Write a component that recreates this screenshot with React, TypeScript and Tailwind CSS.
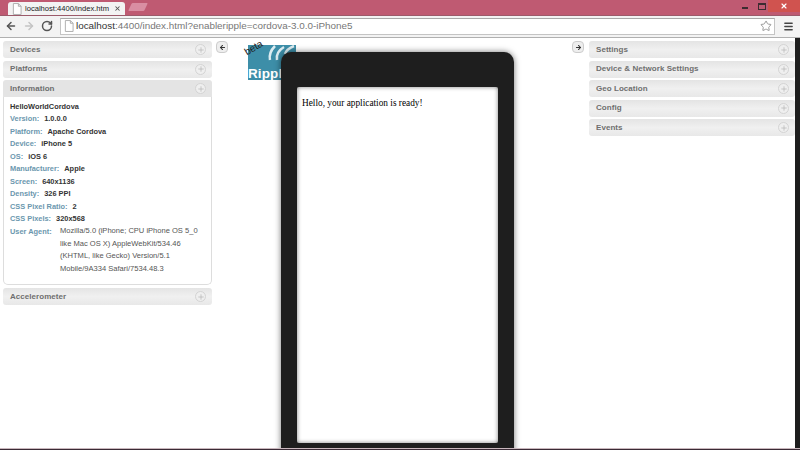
import { ArrowLeft, ArrowRight, Menu, Plus, RotateCw, Star, X } from 'lucide-react'

const leftPanels = ['Devices', 'Platforms']
const rightPanels = ['Settings', 'Device & Network Settings', 'Geo Location', 'Config', 'Events']

const info = [
  { label: 'Version:', value: '1.0.0.0' },
  { label: 'Platform:', value: 'Apache Cordova' },
  { label: 'Device:', value: 'iPhone 5' },
  { label: 'OS:', value: 'iOS 6' },
  { label: 'Manufacturer:', value: 'Apple' },
  { label: 'Screen:', value: '640x1136' },
  { label: 'Density:', value: '326 PPI' },
  { label: 'CSS Pixel Ratio:', value: '2' },
  { label: 'CSS Pixels:', value: '320x568' },
]

function PageIcon() {
  return (
    <svg width="10" height="12" viewBox="0 0 11 13" className="flex-none">
      <path d="M1.5 0.5h5.5l3 3v9h-8.5z M7 0.5v3h3" fill="#fff" stroke="#a9a9a9" />
    </svg>
  )
}

function PanelHeader({ title, className }: { title: string; className?: string }) {
  return (
    <div
      className={`flex h-[17px] flex-none items-center justify-between rounded-[3px] bg-gradient-to-b from-[#e4e4e4] via-[#f0f0f0] to-[#e8e8e8] pr-[6px] pl-[7px] text-[8px] font-bold tracking-[0.05px] text-[#6e6e6e] ${className ?? ''}`}
    >
      <span>{title}</span>
      <span className="flex h-[11px] w-[11px] items-center justify-center rounded-full border border-[#d4d4d4] bg-[#efefef] text-[#b4b4b4]">
        <Plus size={8} strokeWidth={2} />
      </span>
    </div>
  )
}

function CollapseButton({ right }: { right?: boolean }) {
  return (
    <div className="flex h-[12px] w-[12px] flex-none items-center justify-center rounded-[4px] border border-[#ccc] bg-[#eee] text-[#333]">
      {right ? <ArrowRight size={7} strokeWidth={3.5} /> : <ArrowLeft size={7} strokeWidth={3.5} />}
    </div>
  )
}

function InfoPanel() {
  return (
    <div className="flex-none">
      <PanelHeader title="Information" className="rounded-b-none bg-none bg-[#e4e4e4]" />
      <div className="h-[188px] rounded-b-[5px] border border-t-0 border-[#ddd] bg-white pt-[3px] pl-[6px] text-[7.4px] font-bold text-[#333]">
        <div className="flex h-[12.5px] items-center">HelloWorldCordova</div>
        {info.map((row) => (
          <div key={row.label} className="flex h-[12.5px] items-center gap-[5px]">
            <span className="text-[#6b97ae]">{row.label}</span>
            <span>{row.value}</span>
          </div>
        ))}
        <div className="flex">
          <span className="w-[50px] flex-none pt-[1px] text-[#6b97ae]">User Agent:</span>
          <span className="text-[7.55px] leading-[12.5px] font-normal whitespace-nowrap text-[#555]">
            Mozilla/5.0 (iPhone; CPU iPhone OS 5_0
            <br />
            like Mac OS X) AppleWebKit/534.46
            <br />
            (KHTML, like Gecko) Version/5.1
            <br />
            Mobile/9A334 Safari/7534.48.3
          </span>
        </div>
      </div>
    </div>
  )
}

function RippleLogo() {
  return (
    <div className="absolute top-[7px] left-[36px] h-[35px] w-[48px] overflow-hidden bg-[#3d8ea8]">
      <svg width="48" height="35" viewBox="0 0 48 35" className="absolute inset-0">
        <g fill="none" stroke="#dcecf1" strokeWidth="2.5">
          <path d="M22 15c-1-5 1-10 5-14" />
          <path d="M29 15c-1-5 2-10 7-13" />
          <path d="M37 9c1-3 4-6 9-8" />
        </g>
      </svg>
      <span className="absolute bottom-[-2px] left-[0px] text-[13.5px] leading-[16px] font-bold tracking-[0.1px] text-white">
        Ripple
      </span>
    </div>
  )
}

export default function App() {
  return (
    <div className="flex h-[450px] w-[800px] flex-col overflow-hidden bg-white font-['Liberation_Sans',Arial,sans-serif]">
      <div className="relative flex h-[15px] flex-none items-end bg-[#bf5a72] pl-[8px]">
        <div className="flex h-[13px] w-[117px] items-center gap-[3px] rounded-t-[3px] bg-[#f3f3f3] pl-[4px] text-[7.6px] leading-none text-[#222]">
          <PageIcon />
          <span className="w-[86px] whitespace-nowrap">localhost:4400/index.htm</span>
          <X size={7} strokeWidth={3.5} className="text-[#555]" />
        </div>
        <div className="mb-[4px] ml-[5px] h-[8px] w-[16px] -skew-x-[25deg] rounded-[1px] bg-[#d98ea2]" />
        <div className="absolute top-0 right-0 flex h-[12px] items-center">
          <span className="mt-[3px] mr-[10px] h-[2px] w-[6px] bg-[#3c2c30]" />
          <span className="mr-[2px] h-[7px] w-[8px] border border-t-2 border-[#3c2c30]" />
          <span className="flex h-[12px] w-[32px] items-center justify-center bg-[#d0534f] text-white">
            <X size={8} strokeWidth={3.5} />
          </span>
        </div>
      </div>

      <div className="flex h-[23px] flex-none items-center border-b border-[#b0b0b0] bg-[#f3f3f3] pr-[6px] pl-[5px] shadow-[inset_0_1px_0_#9c5a6a]">
        <ArrowLeft size={12} strokeWidth={3} className="text-[#555]" />
        <ArrowRight size={12} strokeWidth={3} className="ml-[6px] text-[#c4c4c4]" />
        <RotateCw size={12} strokeWidth={3} className="ml-[6px] text-[#555]" />
        <div className="ml-[7px] flex h-[17px] flex-1 items-center gap-[2px] border border-[#c4c4c4] border-t-[#a8a8a8] bg-white pl-[3px] text-[9.9px] text-[#777]">
          <PageIcon />
          <span>
            <span className="text-[#333]">localhost</span>:4400/index.html?enableripple=cordova-3.0.0-iPhone5
          </span>
          <Star size={12} className="mr-[2px] ml-auto text-[#999]" />
        </div>
        <Menu size={11} strokeWidth={3} className="ml-[8px] text-[#444]" />
      </div>

      <div className="flex min-h-0 flex-1 overflow-hidden">
        <div className="ml-[3px] flex w-[209px] flex-none flex-col gap-[2.5px] pt-[3px]">
          {leftPanels.map((title) => (
            <PanelHeader key={title} title={title} />
          ))}
          <InfoPanel />
          <PanelHeader title="Accelerometer" className="mt-[0.5px]" />
        </div>

        <div className="relative flex min-w-0 flex-1 items-start pt-[3px] pl-[4px]">
          <RippleLogo />
          <span className="absolute top-[5px] left-[32px] -rotate-[31deg] text-[10px] leading-none text-[#222]">
            beta
          </span>
          <CollapseButton />
          <div className="relative mt-[11px] ml-[53px] h-[420px] w-[233px] flex-none rounded-t-[10px] bg-[#1e1e1e] px-[16px] pt-[35px] shadow-[0_0_6px_rgba(0,0,0,0.55)]">
            <div className="h-[356px] rounded-[2px] bg-white px-[5px] py-[9px] font-['Liberation_Serif',serif] text-[9.3px] leading-[14px] text-black shadow-[inset_0_0_4px_rgba(0,0,0,0.5)]">
              Hello, your application is ready!
            </div>
          </div>
          <div className="ml-[58px]">
            <CollapseButton right />
          </div>
        </div>

        <div className="flex w-[206px] flex-none flex-col gap-[2.5px] pt-[3px]">
          {rightPanels.map((title) => (
            <PanelHeader key={title} title={title} />
          ))}
        </div>
        <div className="w-[5px] flex-none bg-[#1e1e1e]" />
      </div>
      <div className="h-[2px] flex-none border-t border-[#c9b7bd] bg-[#3a2a35]" />
    </div>
  )
}
